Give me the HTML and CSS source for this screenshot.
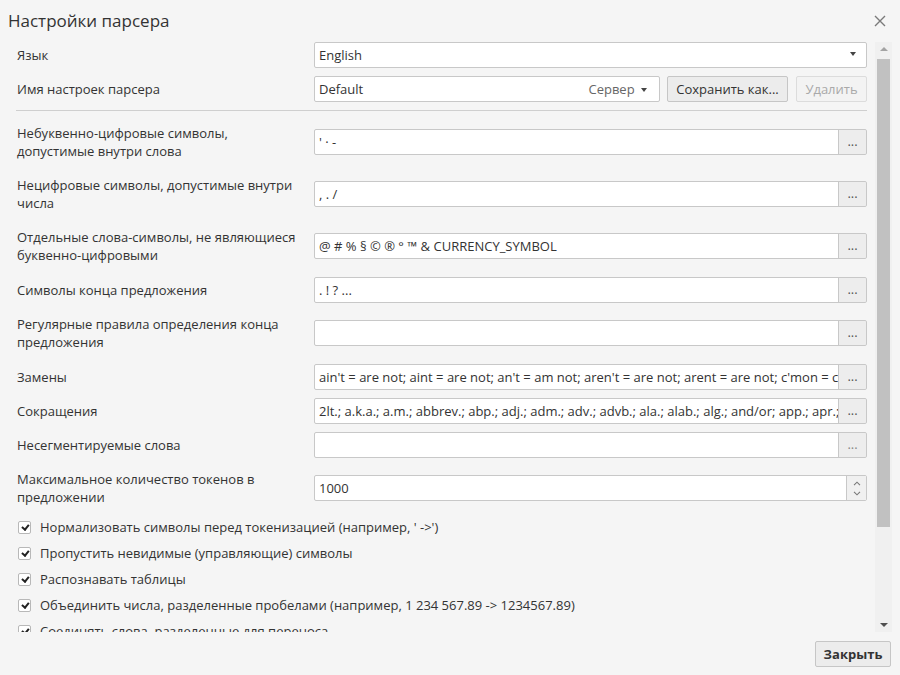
FILE: index.html
```html
<!DOCTYPE html>
<html lang="ru">
<head>
<meta charset="utf-8">
<title>Настройки парсера</title>
<link rel="stylesheet" href="styles.css">
</head>
<body>
<div class="dialog">
  <header class="dlg-head">
    <h1 class="dlg-title">Настройки парсера</h1>
    <button class="dlg-close" aria-label="Закрыть">
      <svg width="12" height="12" viewBox="0 0 12 12"><path d="M1 1L11 11M11 1L1 11" stroke="#7a7a7a" stroke-width="1.4" fill="none"/></svg>
    </button>
  </header>

  <div class="dlg-body">
    <div class="content">
      <div class="form top">
        <div class="lbl">Язык</div>
        <div class="ctl">
          <div class="select">
            <span>English</span>
            <span class="caret"></span>
          </div>
        </div>

        <div class="lbl">Имя настроек парсера</div>
        <div class="ctl ctl-name">
          <div class="combo">
            <span>Default</span>
            <span class="combo-src">Сервер <span class="caret"></span></span>
          </div>
          <button class="btn btn-save">Сохранить как...</button>
          <button class="btn btn-del" disabled>Удалить</button>
        </div>
      </div>

      <div class="sep"></div>

      <div class="form">
        <div class="lbl two">Небуквенно-цифровые символы,<br>допустимые внутри слова</div>
        <div class="ctl"><div class="field"><span class="val">' · -</span><button class="dots">...</button></div></div>

        <div class="lbl two">Нецифровые символы, допустимые внутри<br>числа</div>
        <div class="ctl"><div class="field"><span class="val">, . /</span><button class="dots">...</button></div></div>

        <div class="lbl two">Отдельные слова-символы, не являющиеся<br>буквенно-цифровыми</div>
        <div class="ctl"><div class="field"><span class="val">@ # % § © ® ° ™ &amp; CURRENCY_SYMBOL</span><button class="dots">...</button></div></div>

        <div class="lbl single-after">Символы конца предложения</div>
        <div class="ctl single-after"><div class="field"><span class="val">. ! ? ...</span><button class="dots">...</button></div></div>

        <div class="lbl two">Регулярные правила определения конца<br>предложения</div>
        <div class="ctl"><div class="field"><span class="val"></span><button class="dots">...</button></div></div>

        <div class="lbl single-after">Замены</div>
        <div class="ctl single-after"><div class="field"><span class="val">ain't = are not; aint = are not; an't = am not; aren't = are not; arent = are not; c'mon = come on</span><button class="dots">...</button></div></div>

        <div class="lbl">Сокращения</div>
        <div class="ctl"><div class="field"><span class="val">2lt.; a.k.a.; a.m.; abbrev.; abp.; adj.; adm.; adv.; advb.; ala.; alab.; alg.; and/or; app.; apr.; approx.</span><button class="dots">...</button></div></div>

        <div class="lbl">Несегментируемые слова</div>
        <div class="ctl"><div class="field"><span class="val"></span><button class="dots dim">...</button></div></div>

        <div class="lbl two">Максимальное количество токенов в<br>предложении</div>
        <div class="ctl"><div class="field"><span class="val">1000</span>
          <span class="spin">
            <svg width="8" height="5" viewBox="0 0 8 5"><path d="M1 4.2L4 1.2L7 4.2" stroke="#777" stroke-width="1.1" fill="none"/></svg>
            <svg width="8" height="5" viewBox="0 0 8 5"><path d="M1 0.8L4 3.8L7 0.8" stroke="#777" stroke-width="1.1" fill="none"/></svg>
          </span>
        </div></div>
      </div>

      <ul class="checks">
        <li><span class="cb"></span>Нормализовать символы перед токенизацией (например, ' -&gt;')</li>
        <li><span class="cb"></span>Пропустить невидимые (управляющие) символы</li>
        <li><span class="cb"></span>Распознавать таблицы</li>
        <li><span class="cb"></span>Объединить числа, разделенные пробелами (например, 1 234 567.89 -&gt; 1234567.89)</li>
        <li><span class="cb"></span>Соединять слова, разделенные для переноса</li>
        <li><span class="cb"></span>Распознавать адреса электронной почты</li>
      </ul>
    </div>

    <div class="scrollbar">
      <span class="sb-arrow up"></span>
      <span class="sb-thumb"></span>
      <span class="sb-fill"></span>
      <span class="sb-arrow down"></span>
    </div>
  </div>

  <footer class="dlg-foot">
    <button class="btn btn-close">Закрыть</button>
  </footer>
</div>
</body>
</html>
```

FILE: styles.css
```css
* { box-sizing: border-box; }

html, body {
  margin: 0;
  padding: 0;
  background: #f5f5f5;
}

body {
  font-family: "Open Sans", "Noto Sans", sans-serif;
  font-size: 13px;
  color: #333;
}

.dialog {
  width: 900px;
  height: 675px;
  display: flex;
  flex-direction: column;
  background: #f5f5f5;
}

.dlg-head {
  height: 42px;
  flex: none;
  display: flex;
  align-items: center;
  justify-content: space-between;
  padding: 0 14px 0 8px;
}

.dlg-title {
  margin: 0;
  font-size: 17px;
  font-weight: 400;
  line-height: 42px;
  color: #333;
}

.dlg-close {
  border: 0;
  background: none;
  padding: 0;
  width: 12px;
  height: 12px;
  display: flex;
}

.dlg-body {
  height: 590px;
  flex: none;
  display: flex;
  padding: 0 8px 0 16px;
  overflow: hidden;
}

.content {
  flex: 1;
  margin-right: 8px;
  overflow: hidden;
}

.form {
  display: grid;
  grid-template-columns: 298px 1fr;
  row-gap: 8px;
  align-items: center;
}

.lbl {
  line-height: 18px;
  padding: 4px 0 4px 1px;
  color: #333;
}

.single-after { margin-top: 1px; }

.ctl { min-width: 0; }

.select, .combo, .field {
  height: 26px;
  background: #fff;
  border: 1px solid #c8c8c8;
  border-radius: 2px;
  display: flex;
  align-items: center;
  padding-left: 4px;
  color: #333;
}

.select {
  justify-content: space-between;
  padding-right: 10px;
}

.caret {
  display: inline-block;
  width: 0;
  height: 0;
  border-left: 3.5px solid transparent;
  border-right: 3.5px solid transparent;
  border-top: 4px solid #444;
  vertical-align: middle;
  margin-top: -2px;
}

.ctl-name {
  display: flex;
}

.combo {
  flex: 1;
  justify-content: space-between;
  padding-right: 12px;
}

.combo-src {
  color: #666;
}

.combo-src .caret { margin-left: 3px; }

.btn {
  height: 26px;
  font-family: inherit;
  font-size: 13px;
  border: 1px solid #c6c6c6;
  border-radius: 2px;
  background: #ececec;
  color: #333;
  padding: 0 9px;
  line-height: 22px;
}

.btn-save {
  margin-left: 7px;
  width: 121px;
  padding: 0;
}

.btn-del {
  margin-left: 8px;
  width: 71px;
  padding: 0;
  background: #f3f3f3;
  border-color: #dcdcdc;
  color: #a9a9a9;
}

.sep {
  height: 1px;
  background: #cfcfcf;
  margin: 8px 0 9px;
}

.field {
  padding-right: 0;
  overflow: hidden;
}

.val {
  flex: 1;
  min-width: 0;
  white-space: nowrap;
  overflow: hidden;
  text-overflow: clip;
  padding-right: 2px;
}

.dots {
  flex: none;
  width: 29px;
  height: 26px;
  margin: -1px -1px -1px 0;
  border: 1px solid #c8c8c8;
  border-radius: 0 2px 2px 0;
  background: #ededed;
  color: #555;
  font-family: inherit;
  font-size: 13px;
  padding: 0 0 3px;
  line-height: 20px;
}

.dots.dim { color: #888; }

.spin {
  flex: none;
  width: 20px;
  height: 24px;
  border-left: 1px solid #c8c8c8;
  background: #f0f0f0;
  display: flex;
  flex-direction: column;
  align-items: center;
  justify-content: center;
  gap: 5px;
}

.spin svg { display: block; }

.checks {
  list-style: none;
  margin: 4px 0 0;
  padding: 0;
}

.checks li {
  display: flex;
  align-items: center;
  height: 26px;
  line-height: 18px;
  padding-left: 2px;
  white-space: nowrap;
}

.cb {
  flex: none;
  position: relative;
  width: 13px;
  height: 13px;
  border: 1px solid #b8b8b8;
  border-radius: 2px;
  background: #fff;
  margin-right: 9px;
}

.cb::after {
  content: "";
  position: absolute;
  left: 3.5px;
  top: 1.5px;
  width: 2.5px;
  height: 5px;
  border-right: 2px solid #222;
  border-bottom: 2px solid #222;
  transform: rotate(40deg);
}

.scrollbar {
  flex: none;
  width: 17px;
  height: 590px;
  background: #f0f0f0;
  display: flex;
  flex-direction: column;
  align-items: center;
}

.sb-arrow {
  flex: none;
  width: 0;
  height: 0;
  border-left: 4px solid transparent;
  border-right: 4px solid transparent;
}

.sb-arrow.up {
  border-bottom: 4px solid #a3a3a3;
  margin: 5px 0 8px;
}

.sb-arrow.down {
  border-top: 4px solid #505050;
  margin: 0 0 5px;
}

.sb-thumb {
  flex: none;
  width: 13px;
  height: 468px;
  background: #c1c1c1;
}

.sb-fill { flex: 1; }

.dlg-foot {
  flex: 1;
  display: flex;
  justify-content: flex-end;
  align-items: flex-start;
  padding: 9px 9px 0 0;
}

.btn-close {
  font-weight: 700;
  width: 76px;
  padding: 0;
  background: #ececec;
}
```
